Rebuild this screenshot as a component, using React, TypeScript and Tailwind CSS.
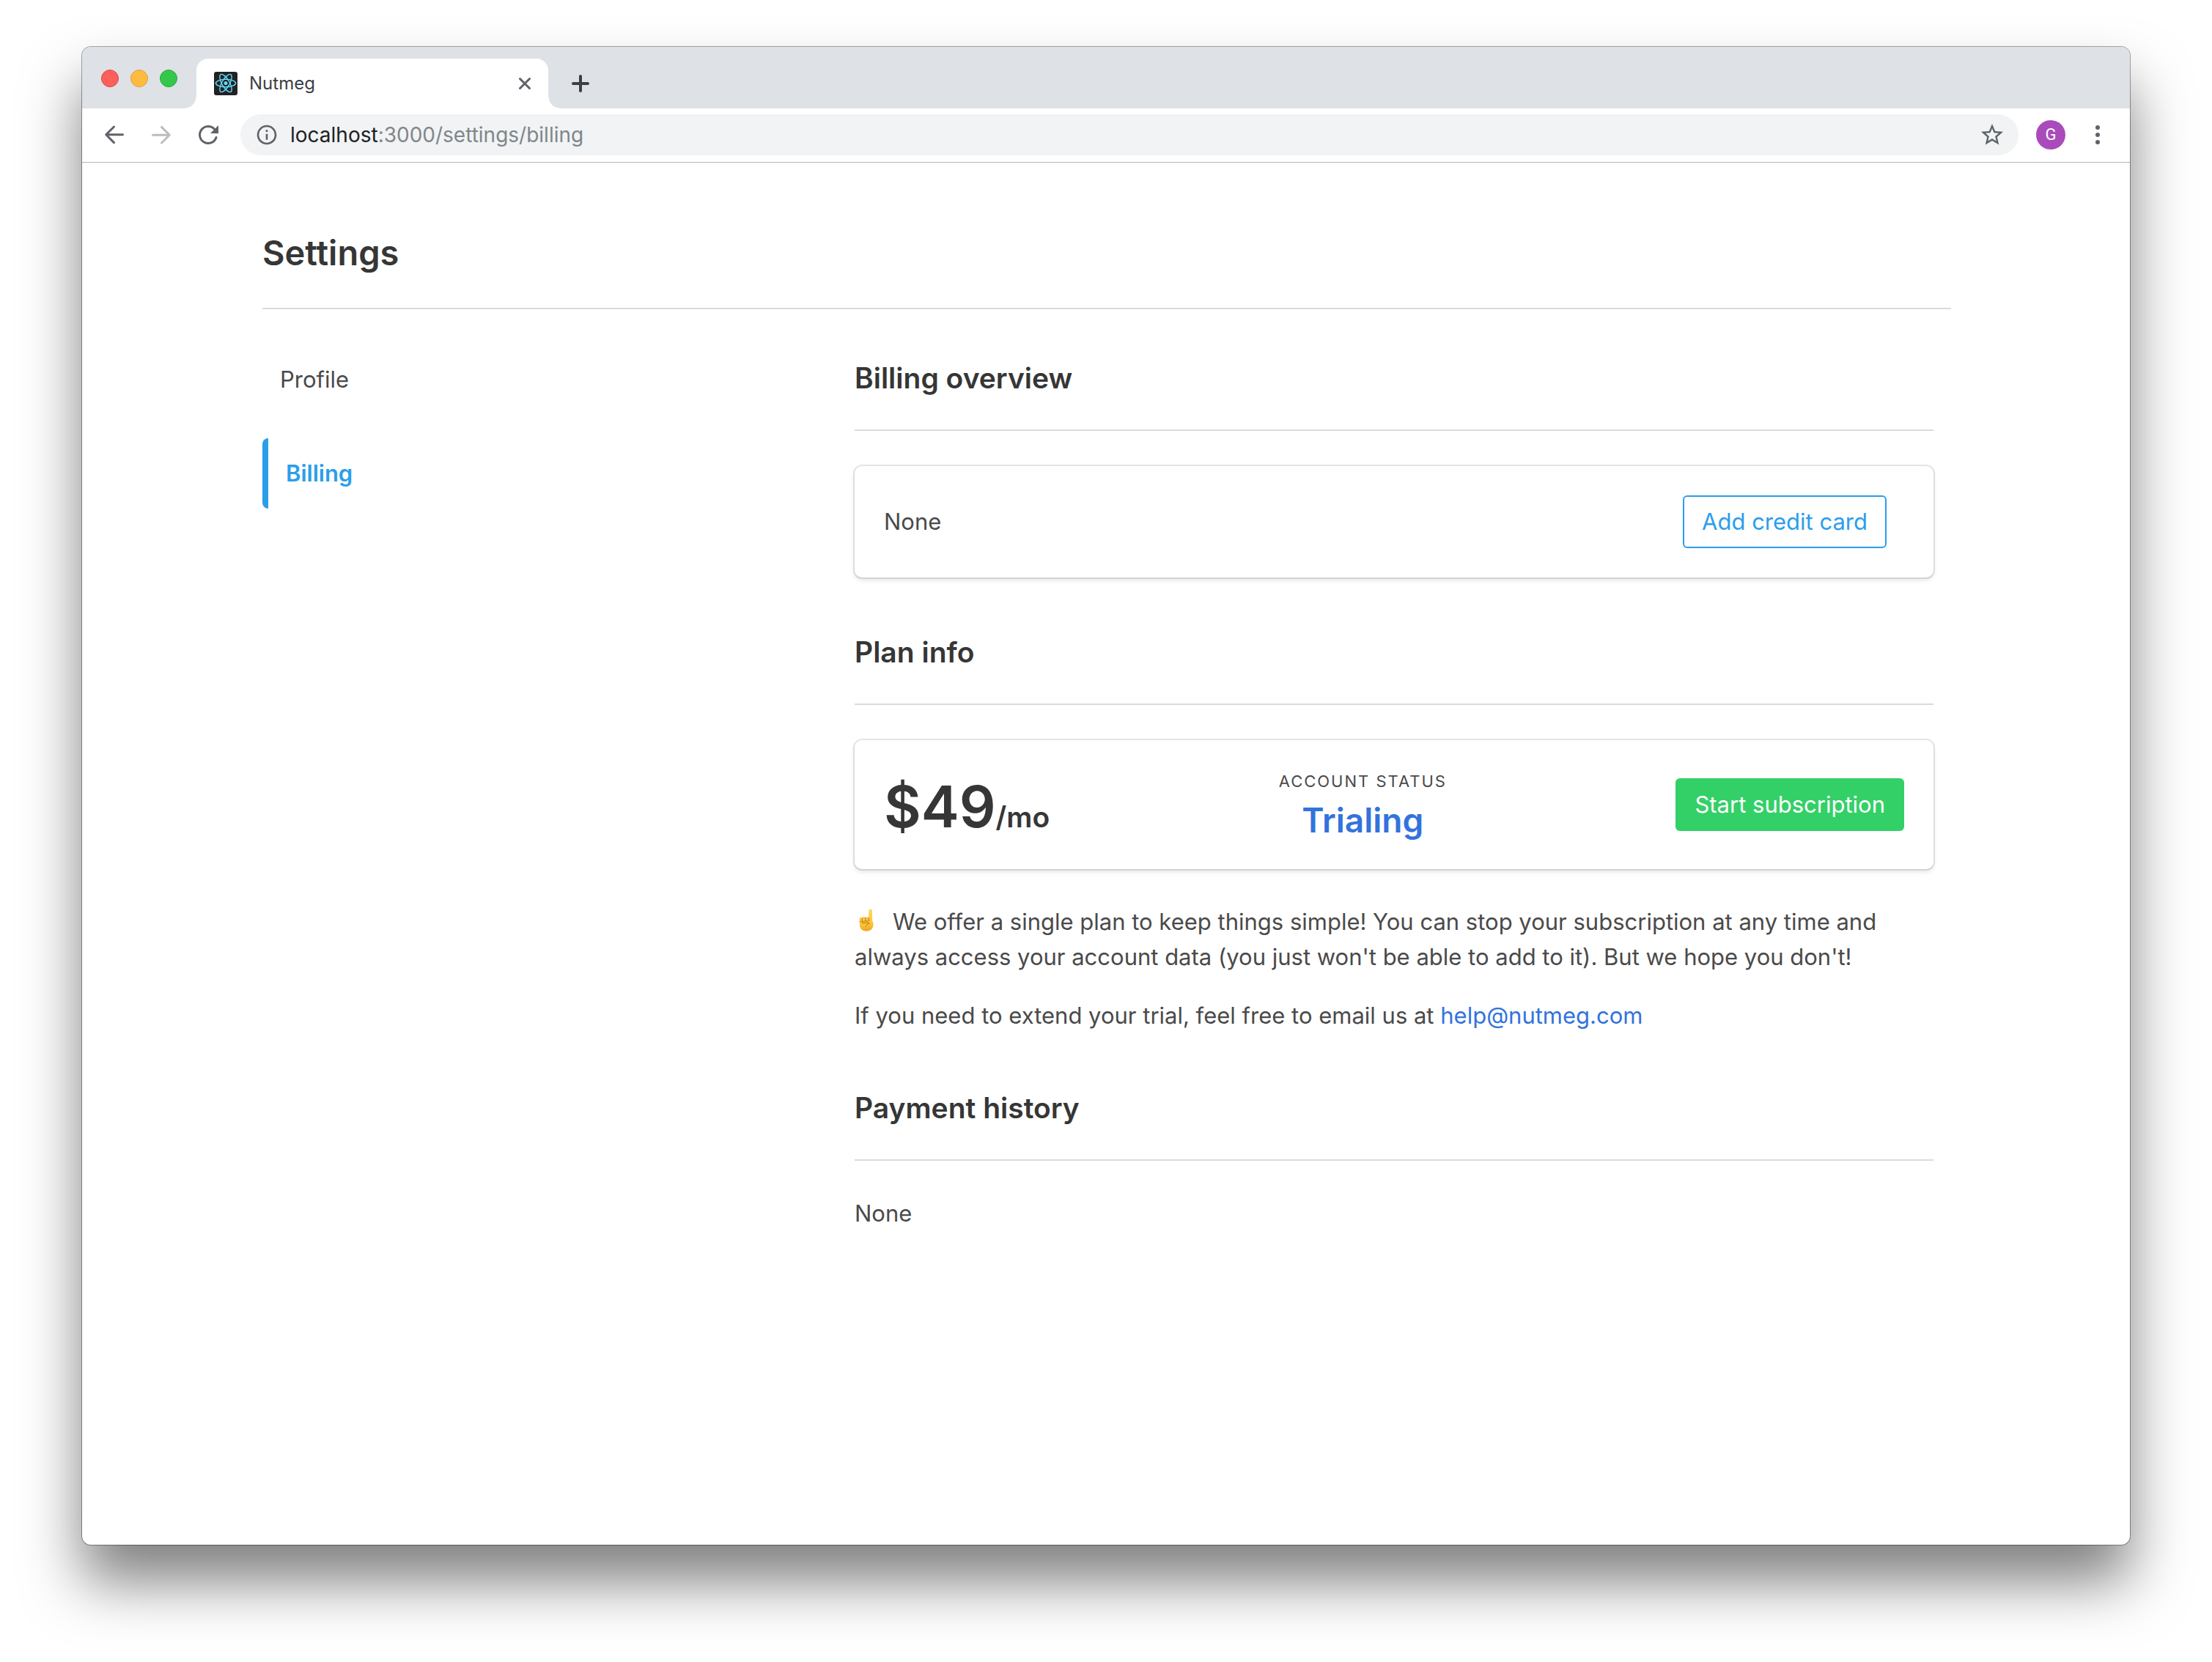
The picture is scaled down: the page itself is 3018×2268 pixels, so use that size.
import React from "react";
import { MdInfoOutline, MdStarBorder } from "react-icons/md";

function ReactLogo() {
  return (
    <svg viewBox="0 0 32 32" className="size-8 shrink-0" aria-hidden="true">
      <rect width="32" height="32" rx="3" fill="#222" />
      <g fill="none" stroke="#61dafb" strokeWidth="1.4">
        <ellipse cx="16" cy="15.5" rx="13.6" ry="5.2" />
        <ellipse cx="16" cy="15.5" rx="13.6" ry="5.2" transform="rotate(60 16 15.5)" />
        <ellipse cx="16" cy="15.5" rx="13.6" ry="5.2" transform="rotate(120 16 15.5)" />
      </g>
      <circle cx="16" cy="15.5" r="2.5" fill="#61dafb" />
    </svg>
  );
}

function ArrowLeft({ className }: { className: string }) {
  return (
    <svg viewBox="0 0 32 32" className={className} fill="none" stroke="currentColor" strokeWidth="3" strokeLinecap="round" strokeLinejoin="round" aria-hidden="true">
      <path d="M27.5 15.8H5M15.5 5 4.7 15.8l10.8 10.8" />
    </svg>
  );
}

function Reload() {
  return (
    <svg viewBox="0 0 32 32" className="size-8" aria-hidden="true">
      <path d="M27 19.5A11.5 11.5 0 1 1 24.5 8.2" fill="none" stroke="currentColor" strokeWidth="3" strokeLinecap="round" />
      <path d="M30 3v11H19z" fill="currentColor" />
    </svg>
  );
}

function PointingHand() {
  return (
    <svg viewBox="0 0 32 36" className="inline-block h-9 w-8 align-[-6px]" role="img" aria-label="Pointing up">
      <defs>
        <linearGradient id="skin" x1="0" y1="0" x2="0" y2="1">
          <stop offset="0" stopColor="#ffd75a" />
          <stop offset="0.7" stopColor="#fcc43a" />
          <stop offset="1" stopColor="#eda323" />
        </linearGradient>
      </defs>
      <path d="M19.5 3.800c0-1.500.9-2.400 2.200-2.400s2.200.9 2.200 2.400l.3 14c1 1.300 1.500 3 1.400 5-.2 5.300-3.800 8.800-9.300 8.800-5.400 0-8.800-3-9.300-7.900l-.5-8.200c0-1.700.8-2.700 2.200-2.700.7 0 1.300.2 1.700.7.4-.9 1.200-1.500 2.200-1.500s1.800.5 2.200 1.300c.5-.7 1.200-1 2.100-1 1 0 1.900.6 2.200 1.500z" fill="url(#skin)" />
      <path d="M10.400 14v4.500M14.900 13.500v4.300M19.300 13.500v4M7.500 18.600c1.200.6 2.500.4 3.200-.4 1.200.7 2.900.5 4-.5 1.600.8 3.200.7 4.600-.1M10.500 20.800c3.500-.8 7.600-.8 9.900.3-2.300.4-4.300 1.700-5.100 3.900" fill="none" stroke="#b8761a" strokeWidth="1" strokeLinecap="round" />
    </svg>
  );
}

function BrowserChrome() {
  return (
    <header>
      <div className="flex h-[84px] items-center bg-[#dee1e6] pl-[26px]">
        <div className="mt-0.5 mr-[26px] flex gap-4">
          <button aria-label="Close window" className="size-6 rounded-full border border-[#e2463f] bg-[#fc605c]" />
          <button aria-label="Minimize window" className="size-6 rounded-full border border-[#e0a033] bg-[#fdbc40]" />
          <button aria-label="Zoom window" className="size-6 rounded-full border border-[#27aa35] bg-[#34c84a]" />
        </div>
        <div className="relative flex h-[68px] w-[480px] items-center self-end rounded-t-2xl bg-white pr-6 pl-6">
          <span className="absolute bottom-0 -left-4 size-4 bg-[radial-gradient(circle_at_0_0,transparent_15px,white_16px)]" />
          <span className="absolute -right-4 bottom-0 size-4 bg-[radial-gradient(circle_at_100%_0,transparent_15px,white_16px)]" />
          <ReactLogo />
          <span className="ml-4 flex-1 text-2xl text-[#3c4043]">Nutmeg</span>
          <button aria-label="Close tab" className="text-[#5f6368]">
            <svg viewBox="0 0 16 16" className="size-4" stroke="currentColor" strokeWidth="3" strokeLinecap="round" aria-hidden="true">
              <path d="M1.500 1.500l13 13M14.500 1.500l-13 13" />
            </svg>
          </button>
        </div>
        <button aria-label="New tab" className="mt-4 ml-8 text-[#3c4043]">
          <svg viewBox="0 0 24 24" className="size-6" stroke="currentColor" strokeWidth="4" strokeLinecap="round" aria-hidden="true">
            <path d="M12 2v20M2 12h20" />
          </svg>
        </button>
      </div>
      <div className="flex h-[74px] items-center border-b border-[#b4b6b9] bg-white pr-7 pb-px pl-7 text-[#5f6368]">
        <button aria-label="Back">
          <ArrowLeft className="size-8" />
        </button>
        <button aria-label="Forward" disabled className="ml-8 text-[#babcbe]">
          <ArrowLeft className="size-8 rotate-180" />
        </button>
        <button aria-label="Reload" className="ml-8">
          <Reload />
        </button>
        <div className="ml-7 flex h-14 flex-1 items-center rounded-full bg-[#f1f3f4] pr-[18px] pl-5">
          <button aria-label="View site information">
            <MdInfoOutline className="size-8" />
          </button>
          <div
            role="textbox"
            aria-label="Address"
            contentEditable
            suppressContentEditableWarning
            spellCheck={false}
            className="ml-4 flex-1 text-[28px] leading-8 text-[#80868b]"
          >
            <span className="text-[#202124]">localhost</span>:3000/settings/billing
          </div>
          <button aria-label="Bookmark this tab">
            <MdStarBorder className="size-9" />
          </button>
        </div>
        <button className="ml-6 size-10 rounded-full bg-[#aa4bbb] font-[Roboto,sans-serif] text-[22px] leading-10 text-white">G</button>
        <button aria-label="Menu" className="ml-7">
          <svg viewBox="0 0 32 32" className="size-8" fill="currentColor" aria-hidden="true">
            <circle cx="16" cy="6" r="3" />
            <circle cx="16" cy="16" r="3" />
            <circle cx="16" cy="26" r="3" />
          </svg>
        </button>
      </div>
    </header>
  );
}

function Section({ title, children }: { title: string; children: React.ReactNode }) {
  return (
    <section>
      <h2 className="border-b-2 border-[#dbdbdb] pb-12 text-[39px] leading-11 font-semibold text-[#363636]">{title}</h2>
      <div className="mt-12">{children}</div>
    </section>
  );
}

function Card({ children }: { children: React.ReactNode }) {
  return (
    <div className="flex items-center justify-between rounded-[10px] bg-white p-10 shadow-[0_4px_6px_rgba(10,10,10,0.1),0_0_0_2px_rgba(10,10,10,0.1)]">
      {children}
    </div>
  );
}

export default function App() {
  return (
    <div className="flex min-h-screen flex-col bg-white px-28 pt-16 pb-40 font-[Inter,sans-serif] text-[31px] leading-12 text-[#4a4a4a]">
      <div className="flex flex-1 flex-col overflow-hidden rounded-xl bg-white shadow-[0_0_0_1px_rgba(0,0,0,0.35),0_50px_80px_rgba(0,0,0,0.5)]">
        <BrowserChrome />
        <main className="mx-auto w-full max-w-[2306px] pt-24 pl-0.5">
          <h1 className="border-b-2 border-[#dbdbdb] pb-12 text-[47px] leading-[54px] font-semibold text-[#363636]">Settings</h1>
          <div className="mt-12 flex gap-10">
            <nav className="flex w-1/3 flex-col gap-8">
              <a href="#profile" className="p-6">Profile</a>
              <a href="#billing" aria-current="page" className="rounded-l-lg border-l-8 border-[#2b9eeb] p-6 font-semibold text-[#2b9eeb]">
                Billing
              </a>
            </nav>
            <div className="flex flex-1 flex-col gap-20 pt-6 pr-6">
              <Section title="Billing overview">
                <Card>
                  <span>None</span>
                  <button className="mr-6 h-[72px] rounded-md border-2 border-[#2b9eeb] px-6 leading-[68px] text-[#2b9eeb]">Add credit card</button>
                </Card>
              </Section>
              <Section title="Plan info">
                <Card>
                  <p className="pt-1.5 text-[78px] leading-[90px] font-semibold text-[#363636]">
                    $49<span className="text-[39px] leading-none">/mo</span>
                  </p>
                  <div className="text-center">
                    <p className="mb-[10px] text-[22px] leading-8 tracking-[2px] uppercase">Account status</p>
                    <p className="text-[46px] leading-[54px] font-semibold text-[#3273dc]">Trialing</p>
                  </div>
                  <button className="h-[72px] rounded-md bg-[#33d067] px-[26px] text-white">Start subscription</button>
                </Card>
                <p className="mt-12">
                  <PointingHand />
                  <span className="ml-5">We offer a single plan to keep things simple! You can stop your subscription at any time and always access your account data (you just won't be able to add to it). But we hope you don't!</span>
                </p>
                <p className="mt-8">
                  If you need to extend your trial, feel free to email us at{" "}
                  <a href="mailto:help@nutmeg.com" className="text-[#3273dc]">help@nutmeg.com</a>
                </p>
              </Section>
              <Section title="Payment history">
                <p>None</p>
              </Section>
            </div>
          </div>
        </main>
      </div>
    </div>
  );
}
